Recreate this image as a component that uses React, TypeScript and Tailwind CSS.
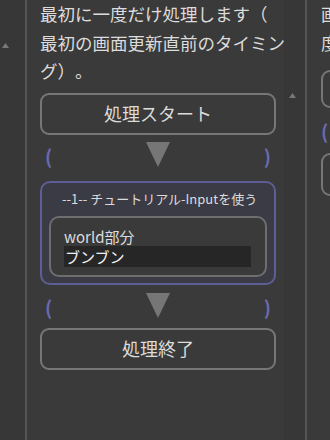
import React from 'react';

const font = { fontFamily: '"Noto Sans CJK JP", "Noto Sans", sans-serif' };

function Arrow() {
  return (
    <div className="flex items-start justify-between h-[38px] pt-[7px] px-[5px]">
      <span className="text-[#6b6bb0] text-[19px] leading-[24px] font-bold mt-[2px]">(</span>
      <svg width="24" height="25" viewBox="0 0 24 25">
        <polygon points="0,0 24,0 12,25" fill="#767676" />
      </svg>
      <span className="text-[#6b6bb0] text-[19px] leading-[24px] font-bold mt-[2px]">)</span>
    </div>
  );
}

function StepButton({ label }: { label: string }) {
  return (
    <div className="h-[42px] rounded-[9px] border-2 border-[#777] flex items-center justify-center text-[18px] text-[#dcdcdc]">
      {label}
    </div>
  );
}

export default function App() {
  return (
    <div className="flex w-[330px] h-[440px] overflow-hidden bg-[#3a3a3a] [text-spacing-trim:space-all]" style={font}>
      <div className="w-[27px] shrink-0 bg-[#373737] border-r-2 border-[#555] pt-[43px] pl-[2px]">
        <svg width="7" height="5" viewBox="0 0 7 5">
          <polygon points="0,5 7,5 3.5,0" fill="#777" />
        </svg>
      </div>

      <div className="w-[257px] shrink-0 pl-[13px] pr-[6px]">
        <div className="text-[17.5px] leading-[28.5px] text-[#dcdcdc] whitespace-nowrap">
          <div>最初に一度だけ処理します（</div>
          <div>最初の画面更新直前のタイミン</div>
          <div>グ）。</div>
        </div>
        <div className="w-[236px] mt-[7px]">
          <StepButton label="処理スタート" />
          <Arrow />
          <div className="mt-[8px] rounded-[10px] border-2 border-[#5e5e96] bg-[#3b3b45] px-[7px] pt-[6px] pb-[6px]">
            <div className="text-[13px] text-[#dcdcdc] pl-[13px] leading-[20px]">--1-- チュートリアル-Inputを使う</div>
            <div className="mt-[7px] rounded-[10px] border-2 border-[#6e6e6e] bg-[#3a3a3a] pl-[13px] pr-[14px] pt-[9px] pb-[8px]">
              <div className="text-[15px] leading-[19px] text-[#dcdcdc]">world部分</div>
              <div className="bg-[#262626] h-[21px] text-[15px] leading-[21px] text-[#f0f0f0] px-[1px]">ブンブン</div>
            </div>
          </div>
          <div className="mt-[1px]">
            <Arrow />
          </div>
          <div className="mt-[4px]">
            <StepButton label="処理終了" />
          </div>
        </div>
      </div>

      <div className="w-[23px] shrink-0 bg-[#373737] border-r-2 border-[#555] pt-[93px] pl-[5px]">
        <svg width="7" height="5" viewBox="0 0 7 5">
          <polygon points="0,5 7,5 3.5,0" fill="#777" />
        </svg>
      </div>

      <div className="flex-1 pl-[14px] text-[17.5px] leading-[28.5px] text-[#dcdcdc] whitespace-nowrap overflow-hidden">
        <div>画</div>
        <div>度</div>
        <div className="mt-[13px] h-[38px] w-[40px] rounded-[9px] border-2 border-[#777]" />
        <div className="text-[#6b6bb0] text-[19px] leading-[45px] font-bold">(</div>
        <div className="h-[43px] w-[40px] rounded-[9px] border-2 border-[#777]" />
      </div>
    </div>
  );
}
